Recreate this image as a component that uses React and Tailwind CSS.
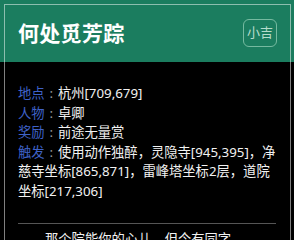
export default function App() {
  const font = { fontFamily: '"Noto Sans", "Noto Sans CJK SC", sans-serif' };
  const Colon = () => (
    <span className="text-[#9a9a9a] inline-block w-[1em] text-center">:</span>
  );
  return (
    <div className="w-[294px] h-[240px] overflow-hidden bg-black relative" style={font}>
      <div className="absolute left-[4px] top-[4px] w-[287px] h-[260px] border border-white/50 pointer-events-none z-10" />
      <div className="h-[62px] bg-[#1b7d5f] flex items-center justify-between pl-[18px] pr-[17px] pt-[4px]">
        <div className="text-white text-[21px] font-bold leading-none tracking-[0.3px]">何处觅芳踪</div>
        <div className="w-[34px] h-[28px] rounded-[6px] border border-[#8cc9b0]/80 text-[#b5dccb] text-[13px] flex items-center justify-center">小吉</div>
      </div>
      <div className="px-[18px] pt-[22px] text-[13.3px] leading-[19.6px] text-[#f2f2f2] whitespace-nowrap">
        <div><span className="text-[#3f62c8]">地点</span><Colon />杭州[709,679]</div>
        <div><span className="text-[#3f62c8]">人物</span><Colon />卓卿</div>
        <div><span className="text-[#3f62c8]">奖励</span><Colon />前途无量赏</div>
        <div><span className="text-[#3f62c8]">触发</span><Colon />使用动作独醉，灵隐寺[945,395]，净</div>
        <div>慈寺坐标[865,871]，雷峰塔坐标2层，道院</div>
        <div>坐标[217,306]</div>
        <div className="mt-[21px] border-t border-[#555]" />
        <div className="pt-[6px] pl-[27px]">那个院能你的心儿，但今有同字</div>
      </div>
    </div>
  );
}
